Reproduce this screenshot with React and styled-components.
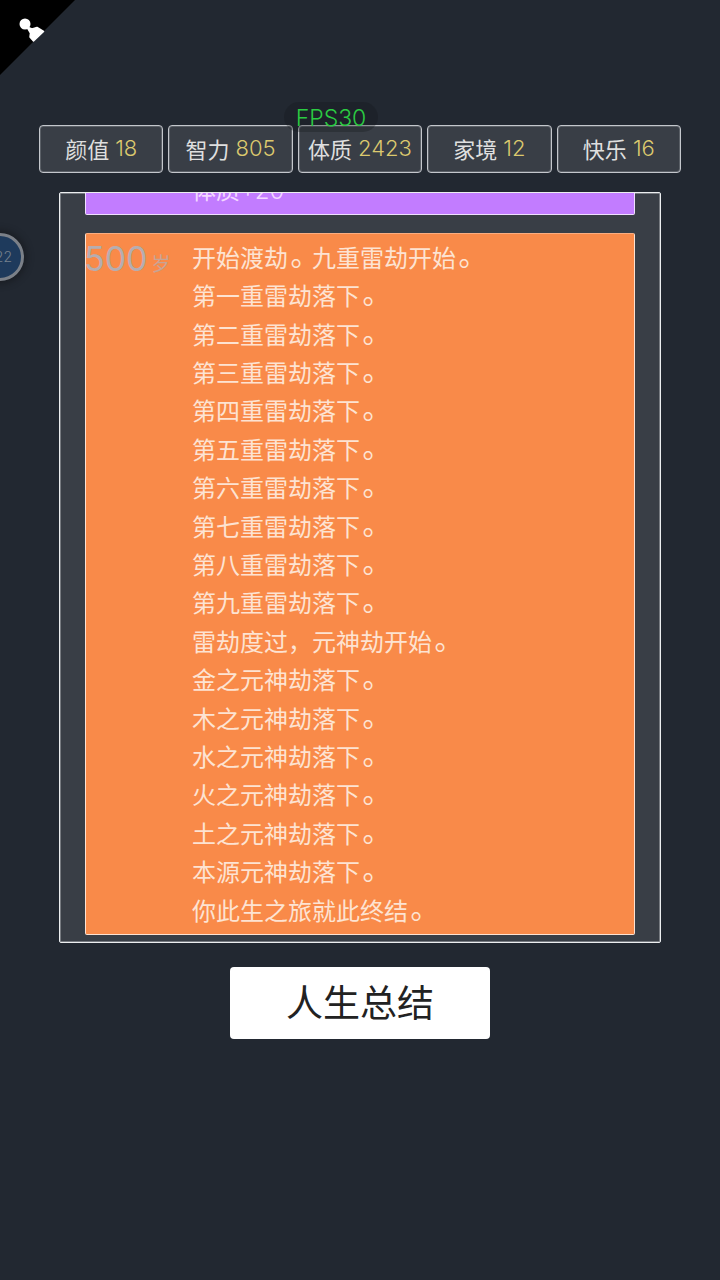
import React from 'react'
import styled, { createGlobalStyle } from 'styled-components'

const GlobalStyle = createGlobalStyle`
  html, body {
    margin: 0;
    padding: 0;
    background: #222831;
  }
  body {
    font-family: "Noto Sans CJK SC", sans-serif;
  }
`

const stats = [
  { label: '颜值', value: 18 },
  { label: '智力', value: 805 },
  { label: '体质', value: 2423 },
  { label: '家境', value: 12 },
  { label: '快乐', value: 16 },
]

const lines = [
  '开始渡劫。九重雷劫开始。',
  '第一重雷劫落下。',
  '第二重雷劫落下。',
  '第三重雷劫落下。',
  '第四重雷劫落下。',
  '第五重雷劫落下。',
  '第六重雷劫落下。',
  '第七重雷劫落下。',
  '第八重雷劫落下。',
  '第九重雷劫落下。',
  '雷劫度过，元神劫开始。',
  '金之元神劫落下。',
  '木之元神劫落下。',
  '水之元神劫落下。',
  '火之元神劫落下。',
  '土之元神劫落下。',
  '本源元神劫落下。',
  '你此生之旅就此终结。',
]

// the full stop sits higher and rounder in the reference
const renderLine = (line) =>
  line.split(/(。)/).map((part, i) => (part === '。' ? <Dot key={i}>。</Dot> : part))

const App = () => {
  return (
    <Page>
      <GlobalStyle />
      <CornerMenu>
        <svg width="75" height="75" viewBox="0 0 75 75">
          <path d="M0 0H75L0 75Z" fill="#000" />
          <circle cx="25" cy="24" r="5.5" fill="#fff" />
          <path d="M27 27L32 29L37 27.5L43.5 31.5L33.5 41L30 37L30.5 33Z" fill="#fff" stroke="#fff" strokeWidth="1.5" strokeLinejoin="round" />
        </svg>
      </CornerMenu>
      <FpsBadge>FPS30</FpsBadge>
      <AvatarBubble>22</AvatarBubble>

      <StatRow>
        {stats.map((s) => (
          <StatBox key={s.label}>
            <span>{s.label}</span>
            <StatValue>{s.value}</StatValue>
          </StatBox>
        ))}
      </StatRow>

      <Panel>
        <Entry $color="#c27cff" $textColor="#f3d6ff" $bottom={3}>
          <Age />
          <EntryText>
            体质<Digits>+20</Digits>
          </EntryText>
        </Entry>
        <Entry $color="#f98a49" $textColor="#fde3d2" $bottom={5}>
          <Age>
            <AgeDigits>500</AgeDigits>
            <AgeUnit>岁</AgeUnit>
          </Age>
          <EntryText>
            {lines.map((l, i) => (
              <div key={i}>{renderLine(l)}</div>
            ))}
          </EntryText>
        </Entry>
      </Panel>

      <SummaryButton>人生总结</SummaryButton>
    </Page>
  )
}

export default App

const Page = styled.div`
  position: relative;
  width: 720px;
  height: 1280px;
  overflow: hidden;
  background: #222831;
  padding-top: 125px;
  box-sizing: border-box;
  display: flex;
  flex-direction: column;
  align-items: center;
`
const CornerMenu = styled.div`
  position: absolute;
  top: 0;
  left: 0;
  width: 75px;
  height: 75px;

  svg {
    display: block;
  }
`
const FpsBadge = styled.div`
  position: absolute;
  top: 102px;
  left: 284px;
  width: 94px;
  height: 30px;
  z-index: 2;
  border-radius: 15px;
  background: rgba(20, 22, 26, 0.3);
  color: #2bcb42;
  font-family: Inter, sans-serif;
  font-weight: 300;
  font-size: 23px;
  line-height: 32px;
  text-align: center;
`
const AvatarBubble = styled.div`
  position: absolute;
  top: 233px;
  left: -24px;
  width: 48px;
  height: 48px;
  box-sizing: border-box;
  border-radius: 50%;
  border: 3px solid #7b8088;
  background: #1e3a5c;
  box-shadow: 0 0 6px 3px rgba(20, 22, 26, 0.55);
  color: #76818d;
  font-family: Inter, sans-serif;
  font-weight: 300;
  font-size: 14px;
  line-height: 42px;
  text-align: right;
  padding-right: 9px;
`
const StatRow = styled.div`
  display: flex;
  gap: 5px;
  width: 642px;
`
const StatBox = styled.div`
  flex: 1;
  height: 48px;
  box-sizing: border-box;
  display: flex;
  align-items: center;
  justify-content: center;
  gap: 6px;
  padding-bottom: 3px;
  background: #393e46;
  border: 1px solid #c4c7cc;
  box-shadow: inset 0 0 0 1px rgba(196, 199, 204, 0.25);
  border-radius: 4px;
  color: #dfdfdf;
  font-size: 22px;
  line-height: 40px;
`
const StatValue = styled.span`
  color: #dcc96e;
  font-family: Inter, sans-serif;
  font-weight: 300;
`
const Panel = styled.div`
  margin-top: 19px;
  width: 602px;
  height: 751px;
  box-sizing: border-box;
  background: #393e46;
  border: 1px solid #eceef0;
  box-shadow: inset 0 0 0 1px rgba(236, 238, 240, 0.35);
  border-radius: 2px;
  padding: 0 25px 7px;
  display: flex;
  flex-direction: column;
  justify-content: flex-end;
  gap: 18px;
  overflow: hidden;
`
const Entry = styled.div`
  flex: none;
  display: flex;
  background: ${(p) => p.$color};
  border: 1px solid rgba(255, 255, 255, 0.75);
  border-top-color: rgba(255, 255, 255, 0.3);
  border-radius: 2px;
  padding: 4px 0 ${(p) => p.$bottom}px;
  color: ${(p) => p.$textColor};
  font-size: 24px;
  line-height: 38.4px;
`
const Digits = styled.span`
  font-family: Inter, sans-serif;
  font-weight: 300;
`
const Dot = styled.span`
  display: inline-block;
  transform: translate(5px, -3px) scale(1.2);
`
const Age = styled.div`
  flex: none;
  width: 106px;
  margin-left: -2px;
  margin-right: 2px;
  font-size: 34px;
  color: #b6adb0;
  white-space: nowrap;
  line-height: 38px;
`
const AgeDigits = styled.span`
  font-family: Inter, sans-serif;
  font-weight: 400;
`
const AgeUnit = styled.span`
  font-size: 19px;
  margin-left: 4px;
  opacity: 0.75;
`
const EntryText = styled.div`
  flex: 1;
`
const SummaryButton = styled.button`
  margin-top: 24px;
  width: 260px;
  height: 72px;
  flex: none;
  border: none;
  border-radius: 4px;
  background: #fff;
  color: #222;
  font-family: inherit;
  font-size: 37px;
  line-height: 68px;
  padding: 0 0 4px;
  cursor: pointer;
`
